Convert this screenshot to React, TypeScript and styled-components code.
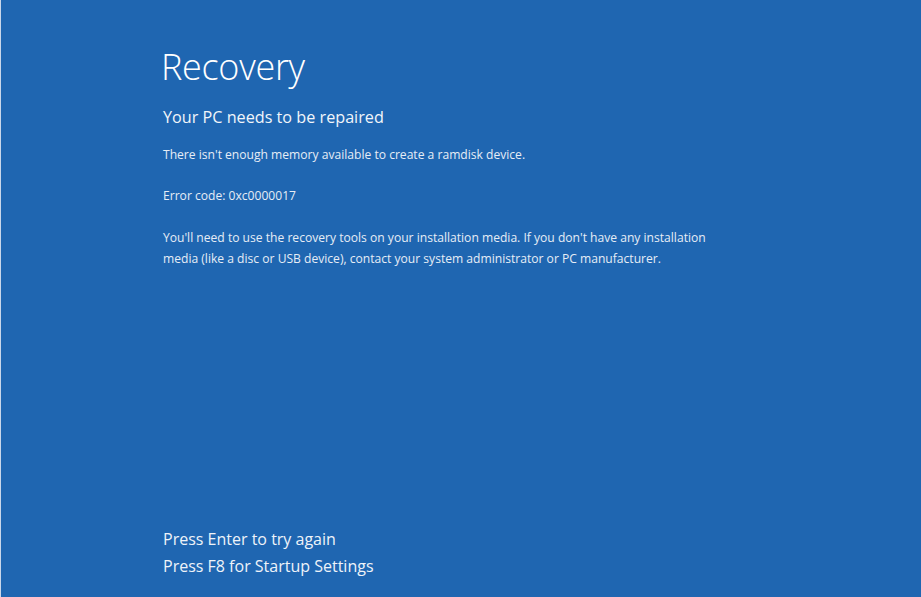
import styled, { createGlobalStyle } from 'styled-components';

const GlobalStyle = createGlobalStyle`
  html, body {
    margin: 0;
    padding: 0;
    height: 100%;
    background: #1f66b1;
  }
  #root {
    height: 100%;
  }
`;

const Screen = styled.div`
  box-sizing: border-box;
  height: 100vh;
  display: flex;
  flex-direction: column;
  padding: 44px 0 17px 161px;
  background: #1f66b1;
  border-left: 1px solid #c9d7ea;
  color: #ffffff;
  font-family: 'Open Sans', 'Noto Sans', sans-serif;
`;

const Title = styled.h1`
  margin: 0 0 0 -1px;
  font-size: 36px;
  font-weight: 300;
  line-height: 46px;
  letter-spacing: -0.3px;
`;

const Subtitle = styled.h2`
  margin: 15px 0 0 1px;
  font-size: 16.2px;
  font-weight: 400;
  line-height: 24px;
  color: #f1f5fa;
`;

const Message = styled.p<{ $gap?: number }>`
  margin: ${(p) => p.$gap ?? 20}px 0 0 1px;
  max-width: 555px;
  font-size: 12.1px;
  line-height: 21px;
  color: #e6edf6;
`;

const Footer = styled.div`
  margin-top: auto;
  display: flex;
  flex-direction: column;
  padding-left: 1px;
`;

const KeyHint = styled.div`
  font-size: 16px;
  line-height: 27px;
  color: #eef3f9;
`;

const App = () => {
  return (
    <>
      <GlobalStyle />
      <Screen>
        <Title>Recovery</Title>
        <Subtitle>Your PC needs to be repaired</Subtitle>
        <Message $gap={15}>There isn't enough memory available to create a ramdisk device.</Message>
        <Message>Error code: 0xc0000017</Message>
        <Message $gap={21}>
          You'll need to use the recovery tools on your installation media. If you don't have any installation
          media (like a disc or USB device), contact your system administrator or PC manufacturer.
        </Message>
        <Footer>
          <KeyHint>Press Enter to try again</KeyHint>
          <KeyHint>Press F8 for Startup Settings</KeyHint>
        </Footer>
      </Screen>
    </>
  );
};

export default App;
